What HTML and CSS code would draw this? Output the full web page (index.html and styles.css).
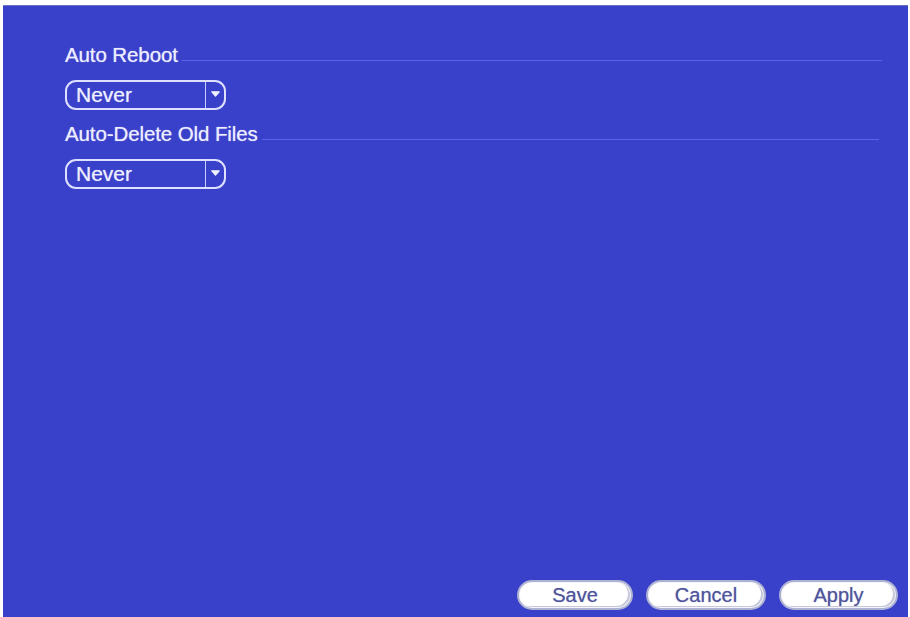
FILE: index.html
```html
<!DOCTYPE html>
<html lang="en">
<head>
<meta charset="utf-8">
<title>General Settings</title>
<link rel="stylesheet" href="styles.css">
</head>
<body>
<div class="screen">
  <div class="content">
    <div class="section-title">
      <span class="label">Auto Reboot</span>
      <span class="rule"></span>
    </div>
    <div class="select first-select">
      <span class="select-value">Never</span>
      <span class="select-arrow">
        <svg width="9" height="6" viewBox="0 0 9 6"><path d="M0.8 0.8 H8.2 L4.5 5.2 Z" fill="#eef0ff" stroke="#eef0ff" stroke-width="1.2" stroke-linejoin="round"/></svg>
      </span>
    </div>
    <div class="section-title second-title">
      <span class="label">Auto-Delete Old Files</span>
      <span class="rule rule-short"></span>
    </div>
    <div class="select second-select">
      <span class="select-value">Never</span>
      <span class="select-arrow">
        <svg width="9" height="6" viewBox="0 0 9 6"><path d="M0.8 0.8 H8.2 L4.5 5.2 Z" fill="#eef0ff" stroke="#eef0ff" stroke-width="1.2" stroke-linejoin="round"/></svg>
      </span>
    </div>
  </div>
  <div class="actions">
    <button class="btn btn-save">Save</button>
    <button class="btn btn-cancel">Cancel</button>
    <button class="btn btn-apply">Apply</button>
  </div>
</div>
</body>
</html>
```
FILE: styles.css
```css
html, body {
  margin: 0;
  padding: 0;
  background: #ffffff;
}

body {
  width: 910px;
  height: 617px;
  overflow: hidden;
  font-family: "Liberation Sans", Arial, sans-serif;
}

.screen {
  margin: 5px 0 0 3px;
  width: 905px;
  height: 612px;
  box-sizing: border-box;
  background: #3940c9;
  border-top: 1px solid #6d72c0;
  display: flex;
  flex-direction: column;
  justify-content: space-between;
  padding: 37px 10px 7px 62px;
}

.content {
  display: flex;
  flex-direction: column;
  align-items: flex-start;
  padding-right: 16px;
}

.section-title {
  display: flex;
  align-items: flex-end;
  width: 100%;
}

.label {
  font-size: 20.5px;
  line-height: 23px;
  color: #eceeff;
  white-space: nowrap;
  letter-spacing: -0.1px;
  text-shadow: 0 0 1px rgba(236, 238, 255, 0.7);
}

.rule {
  flex: 1;
  height: 1px;
  background: #5a64e6;
  margin: 0 0 5px 4px;
}

.rule-short {
  margin-right: 3px;
}

.second-title {
  margin-top: 12px;
}

.select {
  display: flex;
  align-items: stretch;
  width: 161px;
  height: 30px;
  box-sizing: border-box;
  border: 2px solid #dde0ff;
  border-radius: 11px;
  margin-top: 14px;
}

.second-select {
  margin-top: 14px;
}

.select-value {
  flex: 1;
  font-size: 21px;
  line-height: 26px;
  color: #eef0ff;
  padding-left: 9px;
  border-right: 1px solid #c9cdfa;
  text-shadow: 0 0 1px rgba(238, 240, 255, 0.7);
}

.select-arrow {
  width: 18px;
  display: flex;
  align-items: center;
  justify-content: center;
  padding-bottom: 2px;
}

.actions {
  display: flex;
  justify-content: flex-end;
  gap: 13px;
}

.btn {
  height: 30px;
  box-sizing: border-box;
  border: 2px solid #aeb2d2;
  border-radius: 15px;
  background: #ffffff;
  box-shadow: inset 0 0 0 1px #f4f4fa, inset -2px -1px 0 1px #c6c8da;
  font-family: "Liberation Sans", Arial, sans-serif;
  font-size: 20px;
  line-height: 26px;
  color: #4f549c;
  padding: 0;
  text-align: center;
  text-shadow: 0 0 1px rgba(79, 84, 156, 0.6);
}

.btn-save {
  width: 116px;
}

.btn-cancel {
  width: 120px;
}

.btn-apply {
  width: 119px;
}
```
